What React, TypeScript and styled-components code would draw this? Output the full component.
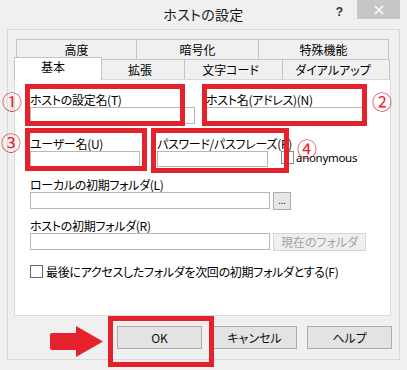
import styled, { createGlobalStyle } from "styled-components"

const RED = "#e5212b"

const GlobalStyle = createGlobalStyle`
  html, body {
    margin: 0;
    padding: 0;
  }
  body {
    background: #f0f0f0;
    font-family: 'Noto Sans CJK JP', 'Noto Sans', sans-serif;
    font-feature-settings: 'palt';
    color: #000;
  }
`

const backTabs = [
  { label: "高度", w: 121 },
  { label: "暗号化", w: 123 },
  { label: "特殊機能", w: 131 },
]

const frontTabs = [
  { label: "基本", w: 88, active: true },
  { label: "拡張", w: 84 },
  { label: "文字コード", w: 99 },
  { label: "ダイアルアップ", w: 108 },
]

const App = () => {
  return (
    <Dialog>
      <GlobalStyle />
      <TitleBar>
        <span />
        <Title>ホストの設定</Title>
        <TitleTools>
          <HelpMark>?</HelpMark>
          <CloseButton>
            <svg width="10" height="10" viewBox="0 0 10 10">
              <path d="M1 1 L9 9 M9 1 L1 9" stroke="#fff" strokeWidth="1.6" />
            </svg>
          </CloseButton>
        </TitleTools>
      </TitleBar>

      <Frame>
        <TabRow $indent={2}>
          {backTabs.map((t) => (
            <BackTab key={t.label} $w={t.w}>{t.label}</BackTab>
          ))}
        </TabRow>
        <TabRow $indent={0}>
          {frontTabs.map((t) => (
            <FrontTab key={t.label} $w={t.w} $active={!!t.active}>{t.label}</FrontTab>
          ))}
        </TabRow>

        <Panel>
          <Row $top={12}>
            <Field $w={165}>
              <Label>ホストの設定名(T)</Label>
              <TextInput $h={17} />
            </Field>
            <Field $w={160} $gap={11}>
              <Label>ホスト名(アドレス)(N)</Label>
              <TextInput $h={17} />
            </Field>
          </Row>

          <Row $top={12}>
            <Field $w={110}>
              <Label>ユーザー名(U)</Label>
              <TextInput $h={16} />
            </Field>
            <Field $w={111} $gap={17}>
              <Label>パスワード/パスフレーズ(P)</Label>
              <TextInput $h={16} />
            </Field>
            <CheckLine $gap={13} $bottom={3}>
              <CheckBox $light />
              <Latin>anonymous</Latin>
            </CheckLine>
          </Row>

          <Block $top={10}>
            <Label>ローカルの初期フォルダ(L)</Label>
            <InputLine>
              <TextInput $h={17} $w={240} />
              <SmallButton $w={18}>...</SmallButton>
            </InputLine>
          </Block>

          <Block $top={8}>
            <Label>ホストの初期フォルダ(R)</Label>
            <InputLine>
              <TextInput $h={17} $w={240} />
              <SmallButton $w={93} $disabled>現在のフォルダ</SmallButton>
            </InputLine>
          </Block>

          <Row $top={14}>
            <CheckLine $gap={0} $bottom={0}>
              <CheckBox />
              <CheckText>最後にアクセスしたフォルダを次回の初期フォルダとする(F)</CheckText>
            </CheckLine>
          </Row>
        </Panel>

        <ButtonRow>
          <DialogButton>OK</DialogButton>
          <DialogButton>キャンセル</DialogButton>
          <DialogButton>ヘルプ</DialogButton>
        </ButtonRow>
      </Frame>

      {/* red annotations drawn over the dialog */}
      <Mark $x={25} $y={84} $w={160} $h={42} />
      <Mark $x={202} $y={84} $w={165} $h={42} />
      <Mark $x={25} $y={128} $w={122} $h={43} />
      <Mark $x={151} $y={128} $w={138} $h={45} />
      <Mark $x={108} $y={316} $w={106} $h={51} />

      <Num $x={2} $y={92}>①</Num>
      <Num $x={372} $y={92}>②</Num>
      <Num $x={1} $y={133}>③</Num>
      <Num $x={297} $y={139}>④</Num>

      <Arrow width="54" height="32" viewBox="0 0 54 32">
        <path d="M0 9 Q0 7 2 7 L26 7 L26 0 L53 15.5 L26 31 L26 24 L2 24 Q0 24 0 22 Z" fill={RED} />
      </Arrow>
    </Dialog>
  )
}

export default App

const Dialog = styled.div`
  width: 407px;
  height: 370px;
  position: relative;
  overflow: hidden;
  background: #f0f0f0;
`

const TitleBar = styled.div`
  height: 29px;
  display: grid;
  grid-template-columns: 1fr auto 1fr;
  align-items: start;
`

const Title = styled.div`
  font-size: 14px;
  line-height: 29px;
  color: #1a1a1a;
  letter-spacing: 0.3px;
`

const TitleTools = styled.div`
  display: flex;
  justify-content: flex-end;
  align-items: flex-start;
  padding-right: 7px;
`

const HelpMark = styled.div`
  font-family: 'Liberation Sans', sans-serif;
  font-weight: 700;
  font-size: 12px;
  line-height: 14px;
  margin-top: 5px;
  margin-right: 14px;
  color: #333;
`

const CloseButton = styled.div`
  width: 43px;
  height: 19px;
  background: #c7c7c7;
  display: flex;
  align-items: center;
  justify-content: center;
`

const Frame = styled.div`
  box-sizing: border-box;
  width: 393px;
  height: 331px;
  margin-left: 7px;
  border: 1px solid #dadada;
  padding: 9px 7px 0 6px;
`

const TabRow = styled.div<{ $indent: number }>`
  display: flex;
  align-items: flex-end;
  height: 20px;
  margin-left: ${(p) => p.$indent}px;
`

const TabBase = styled.div<{ $w: number }>`
  box-sizing: border-box;
  width: ${(p) => p.$w}px;
  border: 1px solid #c4c4c4;
  border-bottom: none;
  font-size: 12px;
  text-align: center;
  background: #f0f0f0;
  & + & {
    margin-left: -1px;
  }
`

const BackTab = styled(TabBase)`
  height: 20px;
  line-height: 19px;
`

const FrontTab = styled(TabBase)<{ $active: boolean }>`
  height: ${(p) => (p.$active ? 23 : 20)}px;
  line-height: ${(p) => (p.$active ? 17 : 19)}px;
  margin-bottom: ${(p) => (p.$active ? -1 : 0)}px;
  background: ${(p) => (p.$active ? "#ffffff" : "#f0f0f0")};
  position: relative;
  z-index: ${(p) => (p.$active ? 2 : 1)};
  padding-right: ${(p) => (p.$active ? 10 : 6)}px;
`

const Panel = styled.div`
  box-sizing: border-box;
  width: 377px;
  height: 237px;
  background: #fff;
  border: 1px solid #d9d9d9;
  padding-left: 15px;
`

const Row = styled.div<{ $top: number }>`
  display: flex;
  align-items: flex-end;
  margin-top: ${(p) => p.$top}px;
`

const Block = styled.div<{ $top: number }>`
  margin-top: ${(p) => p.$top}px;
`

const Field = styled.div<{ $w: number; $gap?: number }>`
  width: ${(p) => p.$w}px;
  margin-left: ${(p) => p.$gap ?? 0}px;
  display: flex;
  flex-direction: column;
`

const Label = styled.div`
  font-size: 12px;
  line-height: 15px;
  height: 15px;
  white-space: nowrap;
  letter-spacing: -0.3px;
`

const TextInput = styled.div<{ $h: number; $w?: number }>`
  box-sizing: border-box;
  height: ${(p) => p.$h}px;
  width: ${(p) => (p.$w ? `${p.$w}px` : "100%")};
  border: 1px solid #b7b7b7;
  background: #fff;
`

const InputLine = styled.div`
  display: flex;
  align-items: flex-start;
  gap: 3px;
`

const SmallButton = styled.div<{ $w: number; $disabled?: boolean }>`
  box-sizing: border-box;
  width: ${(p) => p.$w}px;
  height: 18px;
  border: 1px solid ${(p) => (p.$disabled ? "#d6d6d6" : "#acacac")};
  background: ${(p) => (p.$disabled ? "#efefef" : "#e6e6e6")};
  color: ${(p) => (p.$disabled ? "#a3a3a3" : "#222")};
  font-size: ${(p) => (p.$disabled ? 12 : 9)}px;
  line-height: 15px;
  text-align: center;
  white-space: nowrap;
`

const CheckLine = styled.div<{ $gap: number; $bottom: number }>`
  display: flex;
  align-items: center;
  margin-left: ${(p) => p.$gap}px;
  margin-bottom: ${(p) => p.$bottom}px;
`

const CheckBox = styled.div<{ $light?: boolean }>`
  box-sizing: border-box;
  width: 13px;
  height: 13px;
  border: 1px solid ${(p) => (p.$light ? "#8c8c8c" : "#6a6a6a")};
  background: #fff;
  flex-shrink: 0;
`

const Latin = styled.span`
  font-family: 'Noto Sans', sans-serif;
  font-size: 11.5px;
  line-height: 13px;
  margin-left: 2px;
  letter-spacing: -0.3px;
`

const CheckText = styled.span`
  font-size: 12px;
  line-height: 13px;
  margin-left: 3px;
  white-space: nowrap;
  letter-spacing: -0.3px;
`

const ButtonRow = styled.div`
  display: flex;
  justify-content: flex-end;
  gap: 10px;
  margin-top: 10px;
`

const DialogButton = styled.div`
  box-sizing: border-box;
  width: 85px;
  height: 23px;
  border: 1px solid #adadad;
  background: #e3e3e3;
  font-size: 12px;
  line-height: 21px;
  text-align: center;
  color: #111;
`

const Mark = styled.div<{ $x: number; $y: number; $w: number; $h: number }>`
  position: absolute;
  box-sizing: border-box;
  left: ${(p) => p.$x}px;
  top: ${(p) => p.$y}px;
  width: ${(p) => p.$w}px;
  height: ${(p) => p.$h}px;
  border: 5px solid ${RED};
`

const Num = styled.div<{ $x: number; $y: number }>`
  position: absolute;
  left: ${(p) => p.$x}px;
  top: ${(p) => p.$y}px;
  font-size: 20px;
  line-height: 20px;
  color: ${RED};
  font-weight: 400;
`

const Arrow = styled.svg`
  position: absolute;
  left: 50px;
  top: 326px;
`
